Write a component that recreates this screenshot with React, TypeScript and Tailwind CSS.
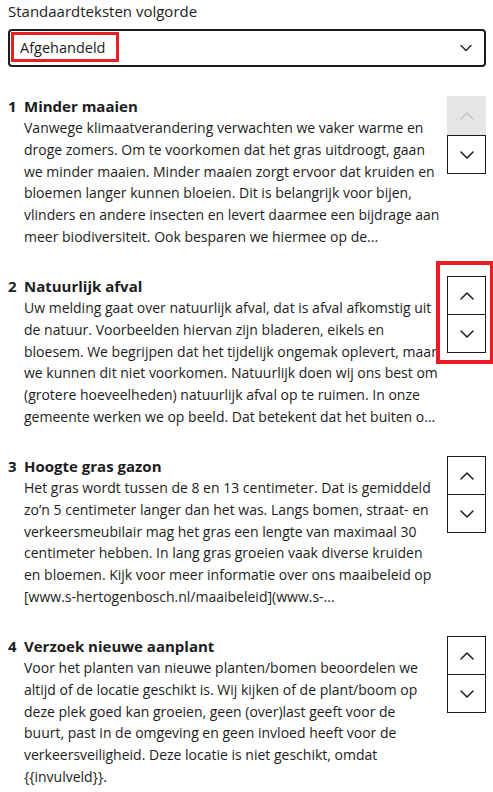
import { ChevronDown, ChevronUp } from "lucide-react";

// preview lines as they are shown in the list (text is cut off after six lines)
const items = [
  {
    title: "Minder maaien",
    lines: [
      "Vanwege klimaatverandering verwachten we vaker warme en",
      "droge zomers. Om te voorkomen dat het gras uitdroogt, gaan",
      "we minder maaien. Minder maaien zorgt ervoor dat kruiden en",
      "bloemen langer kunnen bloeien. Dit is belangrijk voor bijen,",
      "vlinders en andere insecten en levert daarmee een bijdrage aan",
      "meer biodiversiteit. Ook besparen we hiermee op de...",
    ],
  },
  {
    title: "Natuurlijk afval",
    lines: [
      "Uw melding gaat over natuurlijk afval, dat is afval afkomstig uit",
      "de natuur. Voorbeelden hiervan zijn bladeren, eikels en",
      "bloesem. We begrijpen dat het tijdelijk ongemak oplevert, maar",
      "we kunnen dit niet voorkomen. Natuurlijk doen wij ons best om",
      "(grotere hoeveelheden) natuurlijk afval op te ruimen. In onze",
      "gemeente werken we op beeld. Dat betekent dat het buiten o...",
    ],
    highlight: true,
  },
  {
    title: "Hoogte gras gazon",
    lines: [
      "Het gras wordt tussen de 8 en 13 centimeter. Dat is gemiddeld",
      "zo’n 5 centimeter langer dan het was. Langs bomen, straat- en",
      "verkeersmeubilair mag het gras een lengte van maximaal 30",
      "centimeter hebben. In lang gras groeien vaak diverse kruiden",
      "en bloemen. Kijk voor meer informatie over ons maaibeleid op",
      "[www.s-hertogenbosch.nl/maaibeleid](www.s-...",
    ],
  },
  {
    title: "Verzoek nieuwe aanplant",
    lines: [
      "Voor het planten van nieuwe planten/bomen beoordelen we",
      "altijd of de locatie geschikt is. Wij kijken of de plant/boom op",
      "deze plek goed kan groeien, geen (over)last geeft voor de",
      "buurt, past in de omgeving en geen invloed heeft voor de",
      "verkeersveiligheid. Deze locatie is niet geschikt, omdat",
      "{{invulveld}}.",
    ],
  },
];

export default function App() {
  return (
    <div className="min-h-screen bg-white pl-2 pr-[7px] pt-[1px] font-['Open_Sans',sans-serif] text-[#1c1c1c]">
      <label className="block text-[15px] font-medium leading-[20px]">
        Standaardteksten volgorde
      </label>
      <div className="relative mt-[8px] flex h-[38px] items-center justify-between rounded-[4px] border-2 border-[#1c1c1c] pl-[10px] pr-[8px]">
        <span className="text-[14.5px]">Afgehandeld</span>
        <ChevronDown size={20} strokeWidth={1.5} />
        <div className="absolute left-[1px] top-[1px] h-[30px] w-[108px] border-[3.5px] border-[#ec1c24]" />
      </div>

      <div className="mt-[29px] flex flex-col gap-[28.5px]">
        {items.map((item, i) => (
          <div key={item.title} className="flex items-start">
            <div className="flex min-w-0 flex-1">
              <span className="w-4 shrink-0 text-[15px] font-bold leading-[20px]">
                {i + 1}
              </span>
              <div className="min-w-0">
                <h3 className="text-[15px] font-bold leading-[20px]">
                  {item.title}
                </h3>
                <p className="mt-[1px] whitespace-nowrap text-[14px] leading-[21.75px]">
                  {item.lines.map((line) => (
                    <span key={line} className="block">
                      {line}
                    </span>
                  ))}
                </p>
              </div>
            </div>
            <div className="relative flex w-[39px] shrink-0 flex-col">
              {i === 0 ? (
                <button className="flex h-[39px] items-center justify-center bg-[#e6e6e6] text-[#c4c4c4]">
                  <ChevronUp size={24} strokeWidth={1.5} />
                </button>
              ) : (
                <button className="flex h-[39px] items-center justify-center border border-[#1c1c1c]">
                  <ChevronUp size={24} strokeWidth={1.5} />
                </button>
              )}
              <button
                className={`flex h-[39px] items-center justify-center border border-[#1c1c1c] ${
                  i === 0 ? "" : "-mt-px"
                }`}
              >
                <ChevronDown size={24} strokeWidth={1.5} />
              </button>
              {item.highlight && (
                <div className="absolute -left-[11px] -top-[15px] h-[103px] w-[58px] border-4 border-[#ec1c24]" />
              )}
            </div>
          </div>
        ))}
      </div>
    </div>
  );
}
